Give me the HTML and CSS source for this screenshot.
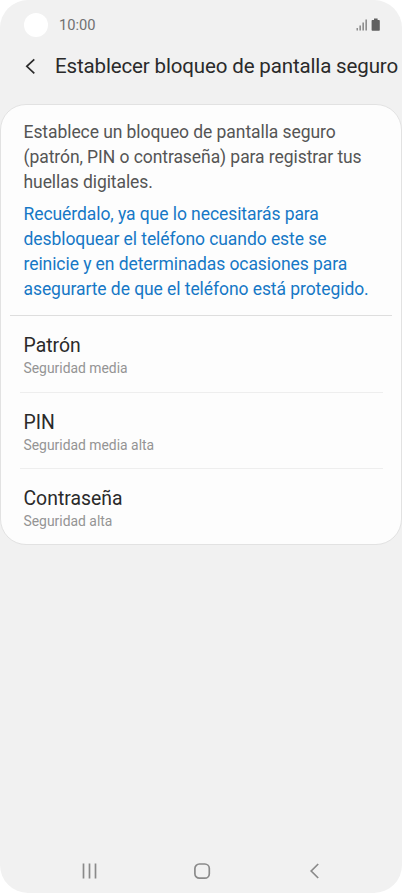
FILE: index.html
```html
<!DOCTYPE html>
<html lang="es">
<head>
  <meta charset="UTF-8">
  <title>Establecer bloqueo de pantalla seguro</title>
  <meta name="viewport" content="width=device-width, initial-scale=1.0">
  <link rel="stylesheet" href="styles.css">
</head>
<body>
  <div class="phone">
    <div class="status-bar">
      <span class="camera"></span>
      <span class="time">10:00</span>
      <svg class="status-icons" width="26" height="14" viewBox="0 0 26 14">
        <g fill="#777">
          <rect x="0.6" y="10" width="1.2" height="2.5"/>
          <rect x="3.5" y="7.5" width="1.3" height="5"/>
          <rect x="6.5" y="4.5" width="1.3" height="8"/>
          <rect x="9.5" y="1.5" width="1.3" height="11"/>
        </g>
        <path d="M18 .6h3.600v1.300h1.400q.8 0 .8.8v9.200q0 .8-.8.8h-6.600q-.8 0-.8-.8V2.700q0-.8.8-.8H18z" fill="#606060"/>
      </svg>
    </div>

    <header class="header">
      <svg class="back" width="11" height="17" viewBox="0 0 11 17">
        <path d="M9.300 1.300L1.800 8.300l7.500 7" fill="none" stroke="#2c2c2c" stroke-width="1.700"/>
      </svg>
      <h1 class="title">Establecer bloqueo de pantalla seguro</h1>
    </header>

    <main class="card">
      <div class="intro">
        <p class="text">Establece un bloqueo de pantalla seguro<br>(patrón, PIN o contraseña) para registrar tus<br>huellas digitales.</p>
        <p class="text notice">Recuérdalo, ya que lo necesitarás para<br>desbloquear el teléfono cuando este se<br>reinicie y en determinadas ocasiones para<br>asegurarte de que el teléfono está protegido.</p>
      </div>
      <ul class="options">
        <li class="option">
          <p class="name">Patrón</p>
          <p class="level">Seguridad media</p>
        </li>
        <li class="option">
          <p class="name">PIN</p>
          <p class="level">Seguridad media alta</p>
        </li>
        <li class="option">
          <p class="name">Contraseña</p>
          <p class="level">Seguridad alta</p>
        </li>
      </ul>
    </main>

    <nav class="nav-bar">
      <svg width="16" height="16" viewBox="0 0 16 16">
        <path d="M1.500 .5v15M7.500 .5v15M13.500 .5v15" stroke="#8a8a8a" stroke-width="1.700"/>
      </svg>
      <svg width="18" height="18" viewBox="0 0 18 18">
        <rect x="1.900" y="2" width="14.400" height="14.200" rx="4.500" fill="none" stroke="#8a8a8a" stroke-width="1.700"/>
      </svg>
      <svg width="16" height="16" viewBox="0 0 16 16">
        <path d="M12.200 1L5.200 8l7 7" fill="none" stroke="#8a8a8a" stroke-width="1.700"/>
      </svg>
    </nav>
  </div>
</body>
</html>
```
FILE: styles.css
```css
* { margin: 0; padding: 0; box-sizing: border-box; }
html, body {
  height: 100%;
  overflow: hidden;
}
body {
  background: #fff;
  font-family: Roboto, "Liberation Sans", sans-serif;
}

.phone {
  display: flex;
  flex-direction: column;
  width: 402px;
  height: 893px;
  background: #f1f1f1;
  border-radius: 28px;
  overflow: hidden;
}

/* status bar */
.status-bar {
  display: flex;
  align-items: center;
  height: 50px;
  padding: 0 20px 0 24px;
}
.camera {
  width: 24px;
  height: 24px;
  border-radius: 50%;
  background: #fff;
}
.time {
  margin-left: 11px;
  font-size: 14.7px;
  color: #707070;
}
.status-icons { margin: -1px 0 0 auto; }

.header {
  display: flex;
  align-items: center;
  height: 54px;
  padding: 0 0 22px 25px;
}
.title {
  margin-left: 19px;
  font-size: 20.5px;
  font-weight: 400;
  letter-spacing: -0.14px;
  color: #2a2a2a;
  white-space: nowrap;
}

.card {
  height: 441px;
  background: #fdfdfd;
  border: 1px solid #e2e2e2;
  border-radius: 26px;
}
.intro {
  height: 211px;
  margin: 0 9px;
  padding: 15px 0 0 13.5px;
  border-bottom: 1px solid #dedede;
}
.text {
  font-size: 17.5px;
  line-height: 25px;
  letter-spacing: -0.07px;
  color: #555;
  white-space: nowrap;
}
.notice {
  margin-top: 7px;
  color: #1678c6;
}

.options {
  margin: 0 18px 0 19px;
  list-style: none;
}
.option {
  height: 76.4px;
  padding: 17px 0 0 3.5px;
}
.option:first-child { height: 76px; }
.option + .option { border-top: 1px solid #eee; }
.name {
  font-size: 19.4px;
  line-height: 25px;
  color: #2a2a2a;
}
.level {
  font-size: 13.9px;
  line-height: 20px;
  color: #949494;
}

.nav-bar {
  display: flex;
  align-items: center;
  justify-content: space-between;
  height: 44px;
  margin-top: auto;
  padding: 0 80px 0 82px;
}
```
